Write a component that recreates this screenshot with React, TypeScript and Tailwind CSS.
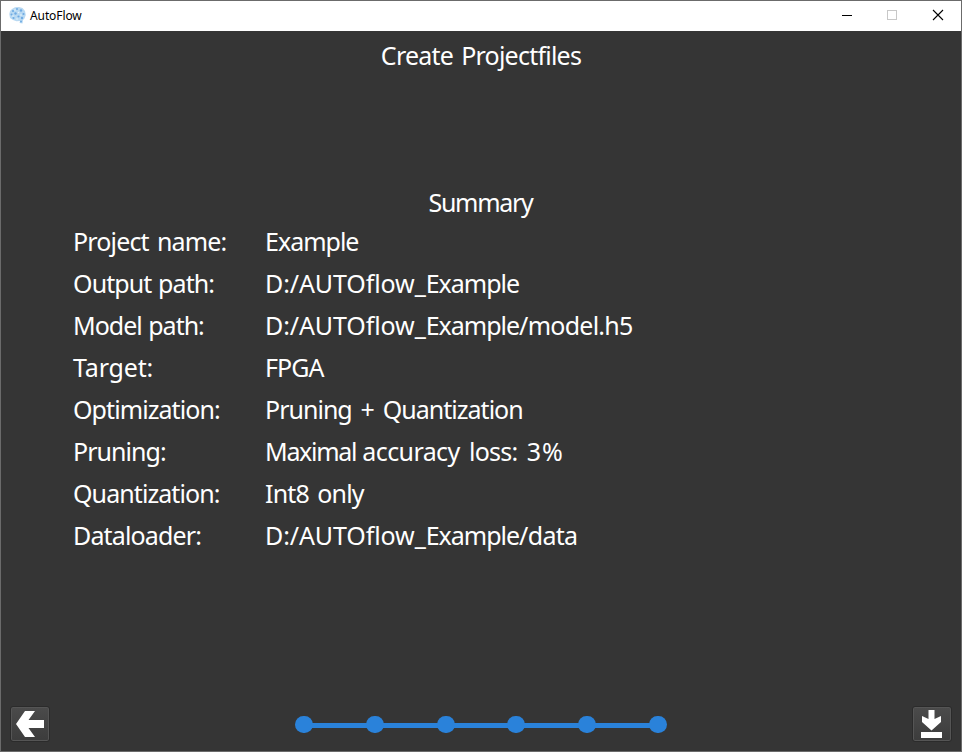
type Part = { text: string; cls: string };

const root: Part = { text: "D:/AUTOflow_", cls: "tracking-[-0.1px]" };
const folder: Part = { text: "Example", cls: "tracking-[-1px]" };

const rows: { label: Part; value: Part[] }[] = [
  { label: { text: "Project name:", cls: "tracking-[-0.85px] [word-spacing:2.6px]" }, value: [folder] },
  { label: { text: "Output path:", cls: "tracking-[-0.9px] [word-spacing:1px]" }, value: [root, folder] },
  {
    label: { text: "Model path:", cls: "tracking-[-1px] [word-spacing:1px]" },
    value: [root, folder, { text: "/model.h5", cls: "tracking-[-0.75px]" }],
  },
  { label: { text: "Target:", cls: "tracking-[-0.15px]" }, value: [{ text: "FPGA", cls: "tracking-[-0.9px]" }] },
  {
    label: { text: "Optimization:", cls: "tracking-[-0.92px]" },
    value: [{ text: "Pruning + Quantization", cls: "tracking-[-0.98px] [word-spacing:3.3px]" }],
  },
  {
    label: { text: "Pruning:", cls: "tracking-[-0.95px]" },
    value: [
      { text: "Maximal ", cls: "tracking-[-1.3px] [word-spacing:1px]" },
      { text: "accuracy ", cls: "tracking-[-0.6px] [word-spacing:3.6px]" },
      { text: "loss: ", cls: "tracking-[-0.8px] [word-spacing:3.6px]" },
      { text: "3%", cls: "tracking-[1px]" },
    ],
  },
  {
    label: { text: "Quantization:", cls: "tracking-[-0.92px]" },
    value: [{ text: "Int8 only", cls: "tracking-[-0.8px] [word-spacing:2.4px]" }],
  },
  {
    label: { text: "Dataloader:", cls: "tracking-[-0.85px]" },
    value: [root, folder, { text: "/data", cls: "tracking-[-0.7px]" }],
  },
];

function BrainIcon() {
  return (
    <svg width="17" height="17" viewBox="0 0 17 17" className="block">
      <path d="M3 2 6 .3l4-.3 3.500 1L16 4l.8 4-1.300 3.500-1.500 1.500-.5 3.500-3-.5.500-2-3.500.2-3.500-1.200L1 11 .3 7 1 4z" fill="#b9d9f2" />
      <g fill="#6fabe3">
        <circle cx="4" cy="4" r="1.100" /><circle cx="8" cy="2" r="1" /><circle cx="12" cy="3.500" r="1.200" />
        <circle cx="2.500" cy="7.500" r="1" /><circle cx="6.500" cy="6.500" r="1.200" /><circle cx="14.500" cy="7" r="1.100" />
        <circle cx="4.500" cy="11" r="1.100" /><circle cx="9.500" cy="9.500" r="1.100" /><circle cx="13" cy="11" r="1.200" />
        <circle cx="12" cy="14.500" r="1" />
      </g>
      <g fill="#e9f5fc">
        <circle cx="6" cy="3" r=".7" /><circle cx="9.500" cy="5.500" r=".8" /><circle cx="4" cy="9" r=".7" />
        <circle cx="12" cy="8" r=".8" /><circle cx="8" cy="12" r=".7" />
      </g>
    </svg>
  );
}

export default function App() {
  return (
    <div className="relative flex h-[752px] w-[962px] flex-col overflow-hidden border border-[#6b6b6b] bg-[#353535] font-['Noto_Sans',sans-serif] text-white">
      <header className="flex h-[30px] shrink-0 items-center bg-white text-black">
        <div className="-mt-px ml-[8px]"><BrainIcon /></div>
        <span className="ml-[4px] text-[12px] leading-[16px] tracking-[-0.1px]">AutoFlow</span>
        <svg className="ml-auto block" width="120" height="30" viewBox="0 0 120 30" fill="none" shapeRendering="crispEdges">
          <path d="M1 14.500h10" stroke="#000" />
          <rect x="46.500" y="9.500" width="9" height="9" stroke="#c8c8c8" />
          <path d="m92 9 10 10m0-10-10 10" stroke="#000" strokeWidth="1.100" shapeRendering="auto" />
        </svg>
      </header>
      <main className="flex flex-1 flex-col">
        <h1 className="mt-[7px] text-center text-[25px] leading-[34px] tracking-[-0.77px] [word-spacing:2.3px]">Create Projectfiles</h1>
        <h2 className="mt-[113px] text-center text-[25px] leading-[34px] tracking-[-1.3px]"><span className="-ml-px">Summary</span></h2>
        <dl className="mt-px ml-[72px]">
          {rows.map((r) => (
            <div key={r.label.text} className="flex h-[42px] items-center text-[25px] leading-[34px] whitespace-pre">
              <dt className="w-[192px]"><span className={r.label.cls}>{r.label.text}</span></dt>
              <dd>{r.value.map((p) => <span key={p.text} className={p.cls}>{p.text}</span>)}</dd>
            </div>
          ))}
        </dl>
        <footer className="mt-auto mb-[9px] flex h-[36px] items-center justify-between px-[9px]">
          <button className="flex h-[36px] w-[40px] items-center justify-center rounded-[3px] border border-[#2b2b2b] bg-linear-to-b from-[#4b4b4b] to-[#3c3c3c] shadow-[inset_0_0_0_1px_#555]">
            <svg width="28" height="26" viewBox="0 0 28 26" fill="#fff"><path d="M0 13 9 0h10l-6.500 9H28v8H12.500L19 26H9z" /></svg>
          </button>
          <div className="mt-px flex items-center">
            {[0, 1, 2, 3, 4, 5].map((i) => (
              <div key={i} className="flex items-center">
                {i > 0 && <div className="-mx-px mt-px h-[5px] w-[54.8px] bg-[#2a82da]" />}
                <div className="h-[17px] w-[18px] rounded-full bg-[#2a82da]" />
              </div>
            ))}
          </div>
          <button className="flex h-[36px] w-[40px] items-center justify-center rounded-[3px] border border-[#2b2b2b] bg-linear-to-b from-[#4b4b4b] to-[#3c3c3c] shadow-[inset_0_0_0_1px_#555]">
            <svg className="-ml-px" width="21" height="28" viewBox="0 0 21 28" fill="#fff"><path d="M7.500 0h6v9L20 6v6l-9.500 8.500L1 12V6l6.500 3zM0 22h21v6H0z" /></svg>
          </button>
        </footer>
      </main>
      <div className="absolute -top-px -left-px h-px w-[568px] bg-[#1e1e1e]" />
      <div className="absolute -top-px -left-px h-[401px] w-px bg-[#1e1e1e]" />
      <div className="absolute top-[211px] -left-px h-[9px] w-px bg-[#5a6650]" />
      <div className="absolute top-[245px] -left-px h-px w-px bg-[#6b6b6b]" />
    </div>
  );
}
